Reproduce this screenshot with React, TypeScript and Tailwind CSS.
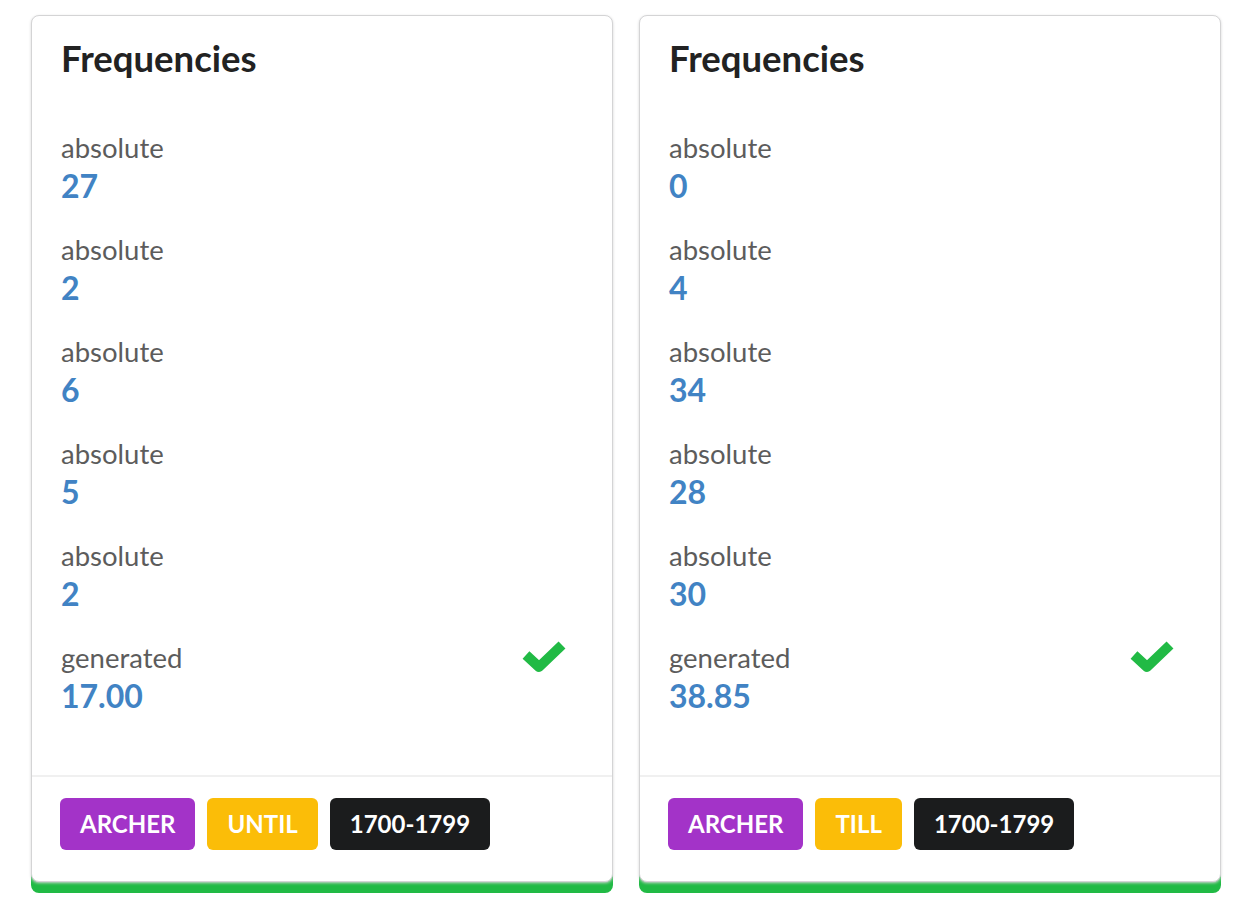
import React from "react";

type Card = {
  values: { label: string; value: string; check?: boolean }[];
  tags: { text: string; color: string }[];
};

const cards: Card[] = [
  {
    values: [
      { label: "absolute", value: "27" },
      { label: "absolute", value: "2" },
      { label: "absolute", value: "6" },
      { label: "absolute", value: "5" },
      { label: "absolute", value: "2" },
      { label: "generated", value: "17.00", check: true },
    ],
    tags: [
      { text: "ARCHER", color: "bg-[#a333c8]" },
      { text: "UNTIL", color: "bg-[#fbbd08]" },
      { text: "1700-1799", color: "bg-[#1b1c1d]" },
    ],
  },
  {
    values: [
      { label: "absolute", value: "0" },
      { label: "absolute", value: "4" },
      { label: "absolute", value: "34" },
      { label: "absolute", value: "28" },
      { label: "absolute", value: "30" },
      { label: "generated", value: "38.85", check: true },
    ],
    tags: [
      { text: "ARCHER", color: "bg-[#a333c8]" },
      { text: "TILL", color: "bg-[#fbbd08]" },
      { text: "1700-1799", color: "bg-[#1b1c1d]" },
    ],
  },
];

function Check() {
  return (
    <svg width="46" height="38" viewBox="0 0 46 38" className="mr-[17px]">
      <polyline
        points="6,19 19,31 42,9"
        fill="none"
        stroke="#21ba45"
        strokeWidth="10"
        strokeLinejoin="round"
        strokeLinecap="butt"
      />
    </svg>
  );
}

function FreqCard({ card }: { card: Card }) {
  return (
    <div className="w-[582px] bg-white rounded-[8px] border border-[#d4d4d5] shadow-[0_1px_3px_0_#d4d4d5,0_11px_0_0_#21ba45]">
      <div className="px-[29px] pt-[22px] pb-[61px]">
        <h2 className="text-[36.5px] leading-[40px] font-bold text-[#222]">Frequencies</h2>
        <div className="mt-[55px] flex flex-col gap-[31px]">
          {card.values.map((v, i) => (
            <div key={i} className="flex items-start justify-between">
              <div>
                <div className="text-[27.5px] leading-[30px] text-[#5c5c5c]">{v.label}</div>
                <div className="mt-[5px] text-[32px] leading-[36px] font-bold text-[#4183c4]">{v.value}</div>
              </div>
              {v.check && (
                <div className="mt-[-7px]">
                  <Check />
                </div>
              )}
            </div>
          ))}
        </div>
      </div>
      <div className="border-t-2 border-[#f0f0f0] px-[28px] pt-[21px] pb-[31px] flex gap-[12px]">
        {card.tags.map((t, i) => (
          <span
            key={i}
            className={`${t.color} h-[52px] px-[20px] rounded-[6px] text-white font-bold text-[24px] flex items-center`}
          >
            {t.text}
          </span>
        ))}
      </div>
    </div>
  );
}

export default function App() {
  return (
    <div className="min-h-[914px] bg-white pl-[31px] pt-[15px] flex items-start gap-[26px] font-['Lato',sans-serif]">
      {cards.map((c, i) => (
        <FreqCard key={i} card={c} />
      ))}
    </div>
  );
}
